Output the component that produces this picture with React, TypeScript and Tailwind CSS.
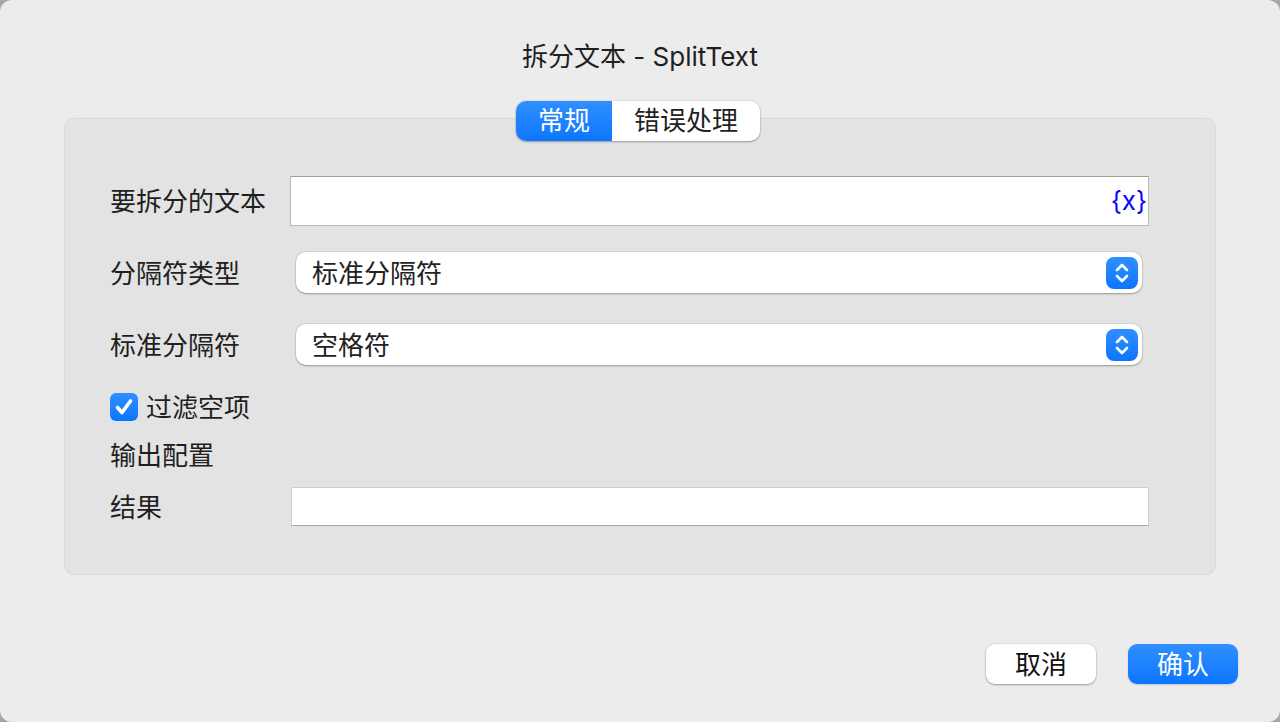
import { useState } from 'react';

const FONT = { fontFamily: 'Inter, "Noto Sans CJK SC", sans-serif' };

function Stepper() {
  return (
    <div className="flex h-[32px] w-[32px] items-center justify-center rounded-[8px] bg-gradient-to-b from-[#2f8fff] to-[#0a76ff]">
      <svg width="16" height="22" viewBox="0 0 16 22" fill="none" stroke="white" strokeWidth="2.6" strokeLinecap="round" strokeLinejoin="round">
        <path d="M3 8 L8 3 L13 8" />
        <path d="M3 14 L8 19 L13 14" />
      </svg>
    </div>
  );
}

function Select({ value }: { value: string }) {
  return (
    <div className="ml-[6px] mr-[7px] flex h-[41px] flex-1 items-center justify-between rounded-[10px] bg-white pl-[16px] pr-[4px] shadow-[0_0_0_1px_rgba(0,0,0,0.05),0_1px_2px_rgba(0,0,0,0.3)]">
      <span className="pt-[2px] text-[26px] leading-[36px] text-[#222]">{value}</span>
      <Stepper />
    </div>
  );
}

export default function App() {
  const [tab, setTab] = useState<'general' | 'error'>('general');
  const [filter, setFilter] = useState(true);

  return (
    <div className="h-[722px] w-[1280px] bg-[#a6a6a6]" style={FONT}>
      <div className="flex h-full w-full flex-col rounded-[12px] bg-[#ececec]">
        <div className="mt-[40px] h-[34px] text-center text-[26px] leading-[34px] text-[#1f1f1f]">
          拆分文本 - SplitText
        </div>

        <div className="relative z-10 mt-[27px] flex h-[40px] justify-center pr-[4px]">
          <div className="flex h-[40px] overflow-hidden rounded-[10px] bg-white shadow-[0_0_0_1px_rgba(0,0,0,0.05),0_1px_2px_rgba(0,0,0,0.3)]">
            <button
              type="button"
              onClick={() => setTab('general')}
              className={`w-[96px] text-[26px] leading-[40px] ${
                tab === 'general' ? 'bg-gradient-to-b from-[#2f8fff] to-[#0a76ff] text-white' : 'text-[#222]'
              }`}
            >
              常规
            </button>
            <button
              type="button"
              onClick={() => setTab('error')}
              className={`w-[148px] text-[26px] leading-[40px] ${
                tab === 'error' ? 'bg-gradient-to-b from-[#2f8fff] to-[#0a76ff] text-white' : 'text-[#222]'
              }`}
            >
              错误处理
            </button>
          </div>
        </div>

        <div className="mx-[64px] -mt-[23px] flex h-[457px] flex-col rounded-[10px] border border-[#d9d9d9] bg-[#e3e3e3] pl-[45px] pr-[66px] pt-[57px]">
          <div className="flex h-[50px] items-center">
            <div className="w-[180px] text-[26px] text-[#1f1f1f]">要拆分的文本</div>
            <div className="flex h-[50px] flex-1 items-center justify-end border border-[#b9b9b9] border-t-[#9e9e9e] bg-white pr-[1px]">
              <span className="text-[26px] leading-[30px] text-[#0a0af5]">{'{x}'}</span>
            </div>
          </div>

          <div className="mt-[26px] flex h-[41px] items-center">
            <div className="w-[180px] pt-[2px] text-[26px] text-[#1f1f1f]">分隔符类型</div>
            <Select value="标准分隔符" />
          </div>

          <div className="mt-[31px] flex h-[41px] items-center">
            <div className="w-[180px] pt-[2px] text-[26px] text-[#1f1f1f]">标准分隔符</div>
            <Select value="空格符" />
          </div>

          <div className="mt-[28px] flex h-[28px] items-center">
            <button
              type="button"
              onClick={() => setFilter(!filter)}
              className={`flex h-[28px] w-[28px] items-center justify-center rounded-[6px] ${
                filter ? 'bg-gradient-to-b from-[#2f8fff] to-[#0a76ff]' : 'bg-white shadow-[0_0_0_1px_rgba(0,0,0,0.2)]'
              }`}
            >
              {filter && (
                <svg width="22" height="22" viewBox="0 0 22 22" fill="none" stroke="white" strokeWidth="3.6" strokeLinecap="round" strokeLinejoin="round">
                  <path d="M4.5 11.5 L9 16.5 L17.5 5" />
                </svg>
              )}
            </button>
            <span className="ml-[8px] text-[26px] text-[#1f1f1f]">过滤空项</span>
          </div>

          <div className="mt-[17px] flex h-[34px] items-center text-[26px] text-[#1f1f1f]">输出配置</div>

          <div className="mt-[15px] flex h-[39px] items-center">
            <div className="w-[181px] pt-[2px] text-[26px] text-[#1f1f1f]">结果</div>
            <div className="h-[39px] flex-1 border border-[#cfcfcf] border-b-[#a9a9a9] bg-white" />
          </div>
        </div>

        <div className="mt-[69px] flex justify-end gap-[32px] pr-[42px]">
          <button
            type="button"
            className="h-[40px] w-[110px] rounded-[9px] bg-white text-[26px] text-[#111] shadow-[0_0_0_1px_rgba(0,0,0,0.05),0_1px_2px_rgba(0,0,0,0.3)]"
          >
            取消
          </button>
          <button
            type="button"
            className="h-[40px] w-[110px] rounded-[9px] bg-gradient-to-b from-[#2f8fff] to-[#0a76ff] text-[26px] text-white shadow-[0_1px_2px_rgba(0,0,0,0.15)]"
          >
            确认
          </button>
        </div>
      </div>
    </div>
  );
}
